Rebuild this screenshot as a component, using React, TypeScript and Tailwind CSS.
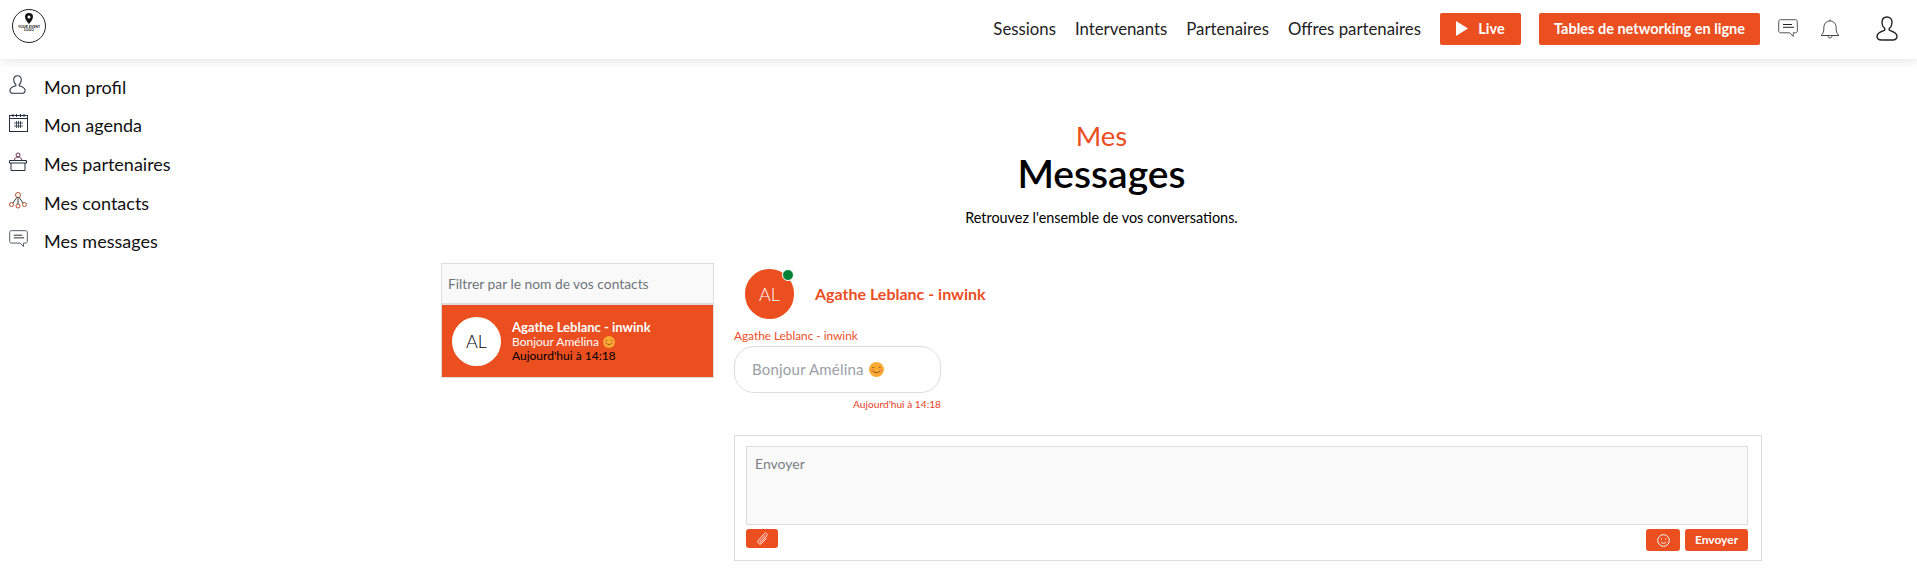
const orange = "bg-[#eb4e1f]";

function UserIcon({ className }: { className?: string }) {
  return (
    <svg className={className} viewBox="0 0 22 25" fill="none" stroke="currentColor" strokeWidth="1.4">
      <path d="M11 1c-3 0-5 2.200-5 5.400 0 2.600 1 4.600 2.600 6 .5.500.4 1.600-.3 2C5 15.600 1 16.800 1 20.300 1 22.800 3 24 5.500 24h11c2.500 0 4.500-1.200 4.500-3.700 0-3.500-4-4.700-7.300-5.900-.7-.4-.8-1.500-.3-2C15 11 16 9 16 6.400 16 3.200 14 1 11 1z" />
    </svg>
  );
}

function ChatIcon({ className }: { className?: string }) {
  return (
    <svg className={className} viewBox="0 0 20 19" fill="none" stroke="currentColor" strokeWidth="1">
      <path d="M2.500.7h15c1 0 1.800.8 1.800 1.800v9.500c0 1-.8 1.800-1.800 1.800h-2.300l.1 3.700-3.600-3.700H2.500c-1 0-1.800-.8-1.800-1.800V2.500c0-1 .8-1.800 1.800-1.800z" />
      <path d="M5 5.500h9M5 8.300h11" stroke="#222" />
    </svg>
  );
}

function CalendarIcon() {
  return (
    <svg className="w-[19px] h-[18px] text-[#23303f]" viewBox="0 0 19 18" fill="none" stroke="currentColor" strokeWidth="1">
      <rect x=".5" y="1.500" width="18" height="16" />
      <path d="M4 0v3M7.500 0v3M11.500 0v3M15 0v3M.5 4.500h18" />
      <path d="M5 9h9M5 12h9M7.500 7v7M9.500 7v7M11.500 7v7" strokeWidth=".8" />
    </svg>
  );
}

function DeskIcon() {
  return (
    <svg className="w-[18px] h-[19px] text-[#23303f]" viewBox="0 0 18 19" fill="none" stroke="currentColor" strokeWidth="1">
      <circle cx="9" cy="3" r="2" stroke="#6b2f4a" />
      <path d="M5.500 8c0-2 1.500-3 3.500-3s3.500 1 3.500 3" stroke="#6b2f4a" />
      <path d="M.5 8.500h17v2.500H.5zM2 11v7.500h14V11" />
    </svg>
  );
}

function NetworkIcon() {
  return (
    <svg className="w-[18px] h-[17px] text-[#3a3f48]" viewBox="0 0 18 17" fill="none" stroke="currentColor" strokeWidth="1">
      <circle cx="9" cy="3" r="2.500" stroke="#b5532f" />
      <circle cx="2.500" cy="12.500" r="2" stroke="#b5532f" />
      <circle cx="9" cy="14" r="2" stroke="#b5532f" />
      <circle cx="15.500" cy="12.500" r="2" stroke="#b5532f" />
      <path d="M9 5.500V12M8 5.200L4 11M10 5.200l4 5.800" />
    </svg>
  );
}

function PlayIcon() {
  return (
    <svg className="w-[12px] h-[15px]" viewBox="0 0 12 15" fill="white">
      <path d="M0 0l12 7.500L0 15z" />
    </svg>
  );
}

function BellIcon() {
  return (
    <svg className="w-[20px] h-[20px] text-[#333]" viewBox="0 0 20 20" fill="none" stroke="currentColor" strokeWidth=".9">
      <path d="M1 16.500c2-1.500 2.800-3.500 2.800-7C3.800 5 6 2 10 2s6.200 3 6.200 7.500c0 3.500.8 5.500 2.800 7z" />
      <path d="M10 .5V2M8 16.800c0 1.200.9 2.200 2 2.200s2-1 2-2.200" />
    </svg>
  );
}

function Logo() {
  return (
    <div className="w-[34px] h-[34px] rounded-full border border-[#222] flex flex-col items-center overflow-hidden">
      <svg className="w-[8px] h-[11px] mt-[3px] shrink-0" viewBox="0 0 8 11">
        <path fillRule="evenodd" fill="#111" d="M4 0a4 4 0 0 1 4 4c0 2.500-2.500 5-4 7-1.500-2-4-4.500-4-7a4 4 0 0 1 4-4zm0 2.500a1.500 1.500 0 1 0 0 3 1.500 1.500 0 0 0 0-3z" />
      </svg>
      <span className="text-[3.500px] leading-[3.500px] font-black text-center text-[#222] mt-[2px] w-[26px]">YOUR EVENT LOGO</span>
    </div>
  );
}

function Smiley({ className }: { className?: string }) {
  return (
    <svg className={className} viewBox="0 0 16 16">
      <circle cx="8" cy="8" r="8" fill="#fbab33" />
      <path d="M3.500 6.500c.5-1 1.500-1 2 0M10.500 6.500c.5-1 1.500-1 2 0M4.500 9.500c1 2.500 6 2.500 7 0" fill="none" stroke="#5b3a10" strokeWidth=".9" />
      <circle cx="3.500" cy="9" r="1.200" fill="#f3785a" />
      <circle cx="12.500" cy="9" r="1.200" fill="#f3785a" />
    </svg>
  );
}

const sideItems = [
  { label: "Mon profil", icon: <UserIcon className="w-[17px] h-[19px] text-[#23303f]" /> },
  { label: "Mon agenda", icon: <CalendarIcon /> },
  { label: "Mes partenaires", icon: <DeskIcon /> },
  { label: "Mes contacts", icon: <NetworkIcon /> },
  { label: "Mes messages", icon: <ChatIcon className="w-[19px] h-[18px] text-[#4a5560]" /> },
];

export default function App() {
  return (
    <div className="h-[574px] overflow-hidden bg-white text-black font-['Lato','Noto_Sans',sans-serif]">
      <header className="relative z-10 h-[59px] pb-[2px] flex items-center bg-white shadow-[0_2px_10px_rgba(0,0,0,0.1)]">
        <div className="ml-[12px] -mt-[6px]">
          <Logo />
        </div>
        <nav className="ml-auto flex items-center gap-[19px] text-[16.800px] text-[#222]">
          <a>Sessions</a>
          <a>Intervenants</a>
          <a>Partenaires</a>
          <a>Offres partenaires</a>
        </nav>
        <button className={`ml-[19px] w-[81px] h-[32px] flex items-center justify-center gap-[10px] rounded-[2px] ${orange} text-white text-[14.500px] font-bold`}>
          <PlayIcon />
          Live
        </button>
        <button className={`ml-[18px] w-[221px] h-[32px] rounded-[2px] ${orange} text-white text-[14.500px] font-bold`}>
          Tables de networking en ligne
        </button>
        <ChatIcon className="ml-[18px] w-[20px] h-[19px] text-[#555]" />
        <div className="ml-[22px]">
          <BellIcon />
        </div>
        <UserIcon className="ml-[36px] mr-[19px] w-[22px] h-[25px] text-[#222]" />
      </header>

      <div className="flex">
        <aside className="w-[441px] shrink-0 pt-[9px] pl-[9px]">
          {sideItems.map((item) => (
            <div key={item.label} className="h-[38.600px] flex items-center text-[18px] text-[#111]">
              <span className="w-[35px] -mt-[5px] flex">{item.icon}</span>
              {item.label}
            </div>
          ))}
        </aside>

        <main className="w-[1321px]">
          <div className="pt-[61px] text-center">
            <p className="text-[27.500px] leading-[32px] text-[#eb4e1f]">Mes</p>
            <h1 className="text-[39px] leading-[42px] font-semibold">Messages</h1>
            <p className="mt-[14px] text-[14.400px] leading-[20px]">Retrouvez l'ensemble de vos conversations.</p>
          </div>

          <div className="mt-[35px] flex gap-[20px]">
            <div className="w-[273px] shrink-0">
              <div className="h-[42px] pt-[1px] border border-[#ddd] border-b-[2px] bg-[#f9f9f9] px-[6px] flex items-center text-[13.800px] text-[#6f757b]">
                Filtrer par le nom de vos contacts
              </div>
              <div className={`h-[73px] border border-[#ddd] border-t-0 ${orange} flex items-center pl-[10px] gap-[11px]`}>
                <div className="w-[49px] h-[49px] rounded-full bg-white flex items-center justify-center text-[18px] font-light text-black">
                  AL
                </div>
                <div className="text-[12px] leading-[14px]">
                  <p className="text-white font-bold text-[13px] leading-[15px]">Agathe Leblanc - inwink</p>
                  <p className="text-white flex items-center gap-[4px]">
                    Bonjour Amélina <Smiley className="w-[12px] h-[12px]" />
                  </p>
                  <p className="text-black">Aujourd'hui à 14:18</p>
                </div>
              </div>
            </div>

            <div className="w-[1029px]">
              <div className="h-[56px] pl-[11px] pt-[6px] flex items-center gap-[21px]">
                <div className="relative w-[49px] h-[50px] rounded-full bg-[#eb4e1f] flex items-center justify-center text-[18px] font-light text-white">
                  AL
                  <span className="absolute right-[0px] top-[0px] w-[12px] h-[12px] rounded-full bg-green-700 border border-white" />
                </div>
                <span className="text-[16px] font-bold text-[#eb4e1f]">Agathe Leblanc - inwink</span>
              </div>
              <p className="mt-[10px] text-[11.800px] leading-[14px] text-[#eb4e1f]">Agathe Leblanc - inwink</p>
              <div className="w-[207px] mt-[3px]">
                <div className="h-[47px] rounded-[20px] border border-[#ddd] px-[17px] flex items-center gap-[5px] text-[15px] tracking-[0.2px] text-[#9aa0a6]">
                  Bonjour Amélina <Smiley className="w-[15px] h-[15px]" />
                </div>
                <p className="mt-[5px] text-right text-[10.200px] leading-[12px] text-[#e8412a]">Aujourd'hui à 14:18</p>
              </div>

              <div className="mt-[25px] h-[126px] border border-[#ddd] pl-[11px] pr-[13px] pt-[10px]">
                <div className="h-[79px] border border-[#ddd] bg-[#f9f9f9] px-[8px] py-[8px] text-[14px] leading-[18px] text-[#7a7f85]">
                  Envoyer
                </div>
                <div className="mt-[4px] flex items-start">
                  <button className={`w-[32px] h-[19px] rounded-[3px] ${orange} flex items-center justify-center`}>
                    <svg className="w-[13px] h-[13px]" viewBox="0 0 13 13" fill="none" stroke="#fdd" strokeWidth="1">
                      <path d="M9.500 3L4 9c-.8.900.4 2 1.200 1.200l5.600-6.300c1.500-1.700-1-4-2.600-2.300L2.500 8c-2.200 2.500 1.200 5.700 3.500 3.200l4.500-5" />
                    </svg>
                  </button>
                  <button className={`ml-auto w-[34px] h-[22px] rounded-[3px] ${orange} flex items-center justify-center`}>
                    <svg className="w-[13px] h-[13px]" viewBox="0 0 13 13" fill="none" stroke="white" strokeWidth="1">
                      <circle cx="6.500" cy="6.500" r="5.800" />
                      <path d="M3.800 7.800c1 2 4.400 2 5.400 0M4.500 4.500v1M8.500 4.500v1" />
                    </svg>
                  </button>
                  <button className={`ml-[5px] w-[63px] h-[22px] rounded-[3px] ${orange} text-white text-[12px] font-bold`}>
                    Envoyer
                  </button>
                </div>
              </div>
            </div>
          </div>
        </main>
      </div>
    </div>
  );
}
